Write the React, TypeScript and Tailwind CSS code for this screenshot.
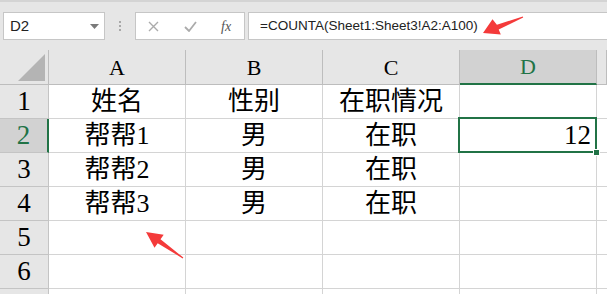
const rows = [
  ["姓名", "性别", "在职情况", ""],
  ["帮帮1", "男", "在职", "12"],
  ["帮帮2", "男", "在职", ""],
  ["帮帮3", "男", "在职", ""],
  ["", "", "", ""],
  ["", "", "", ""],
  ["", "", "", ""],
];

// E is only a sliver at the right edge, its letter sits off-screen
const cols = ["A", "B", "C", "D", ""];

export default function App() {
  return (
    <div className="relative w-[607px] h-[294px] overflow-hidden bg-white font-['Liberation_Serif','Noto_Sans_CJK_SC',serif] text-black">
      {/* Formula bar */}
      <div className="h-[50px] bg-[#e6e6e6] border-t-2 border-[#d4d4d4] pt-[10px] flex items-start font-['Liberation_Sans','Noto_Sans_CJK_SC',sans-serif]">
        <div className="ml-[3px] w-[102px] h-[28px] bg-white border border-[#c6c6c6] flex items-center justify-between pl-[6px] pr-[5px]">
          <span className="text-[15px] text-[#222]">D2</span>
          <svg width="9" height="5" viewBox="0 0 9 5">
            <path d="M0 0h9L4.5 5z" fill="#7a7a7a" />
          </svg>
        </div>
        <div className="w-[30px] h-[28px] flex flex-col items-center justify-center gap-[2px]">
          <div className="w-[2px] h-[2px] bg-[#a8a8a8]" />
          <div className="w-[2px] h-[2px] bg-[#a8a8a8]" />
          <div className="w-[2px] h-[2px] bg-[#a8a8a8]" />
        </div>
        <div className="w-[110px] h-[28px] bg-white border border-[#c6c6c6] flex items-center">
          <svg className="ml-[12px]" width="11" height="11" viewBox="0 0 11 11">
            <path d="M1 1l9 9M10 1l-9 9" stroke="#ababab" strokeWidth="1.4" />
          </svg>
          <svg className="ml-[25px]" width="13" height="11" viewBox="0 0 13 11">
            <path d="M1 6l4 4 7-9" stroke="#ababab" strokeWidth="1.8" fill="none" />
          </svg>
          <span className="ml-[24px] text-[14px] italic font-['Liberation_Serif',serif] text-[#555]">fx</span>
        </div>
        <div className="ml-[3px] flex-1 h-[28px] bg-white border-y border-l border-[#c6c6c6] flex items-center pl-[11px]">
          <span className="text-[13.5px] text-[#222]">=COUNTA(Sheet1:Sheet3!A2:A100)</span>
        </div>
      </div>

      {/* Sheet grid */}
      <div className="grid grid-cols-[49px_137px_137px_137px_137px_1fr] grid-rows-[35px_repeat(7,34px)]">
        <div className="relative bg-[#e6e6e6] border-r border-b border-[#bdbdbd]">
          <svg className="absolute left-[18px] top-[4px]" width="27" height="27" viewBox="0 0 27 27">
            <path d="M27 0V27H0z" fill="#b4b4b4" />
          </svg>
        </div>
        {cols.map((c, k) =>
          c === "D" ? (
            <div
              key={k}
              className="bg-[#d2d2d2] border-r border-[#bdbdbd] border-b-2 border-b-[#217346] flex items-center justify-center text-[22px] text-[#217346]"
            >
              {c}
            </div>
          ) : (
            <div
              key={k}
              className="bg-[#e6e6e6] border-r border-b border-[#bdbdbd] flex items-center justify-center text-[22px]"
            >
              {c}
            </div>
          )
        )}

        {rows.map((r, i) => {
          const selected = i === 1;
          return [
            <div
              key={`h${i}`}
              className={
                selected
                  ? "bg-[#d2d2d2] border-b border-[#c4c4c4] border-r-2 border-r-[#217346] flex items-center justify-center text-[27px] text-[#217346]"
                  : "bg-[#e6e6e6] border-r border-b border-[#c4c4c4] flex items-center justify-center text-[27px]"
              }
            >
              {i < 6 ? i + 1 : ""}
            </div>,
            ...r.map((v, j) =>
              j === 3 && selected ? (
                <div
                  key={`c${i}-${j}`}
                  className="relative border-r border-b border-[#d4d4d4] flex items-center justify-end pr-[5px] text-[27px]"
                >
                  {v}
                  <div className="absolute -left-[2px] -top-[2px] -right-[1px] -bottom-[1px] border-2 border-[#217346]" />
                  <div className="absolute -right-[4px] -bottom-[4px] w-[7px] h-[7px] bg-[#217346] border border-white" />
                </div>
              ) : (
                <div
                  key={`c${i}-${j}`}
                  className="border-r border-b border-[#d4d4d4] flex items-center justify-center text-[26px]"
                >
                  {v}
                </div>
              )
            ),
            <div key={`e${i}`} className="border-b border-[#d4d4d4]" />,
          ];
        })}
      </div>

      {/* Annotation arrows */}
      <svg className="absolute inset-0 pointer-events-none" width="607" height="294" viewBox="0 0 607 294">
        <polygon
          points="483,33 500.8,34.5 498.7,29.4 523.2,17.5 522.8,16.5 496.9,24.8 492.5,19.2"
          fill="#f43a3a"
        />
        <polygon
          points="146,232 154.5,247.7 157.7,243.2 182.7,258.4 183.3,257.6 160.5,239.2 163.7,234.7"
          fill="#f43a3a"
        />
      </svg>
    </div>
  );
}
